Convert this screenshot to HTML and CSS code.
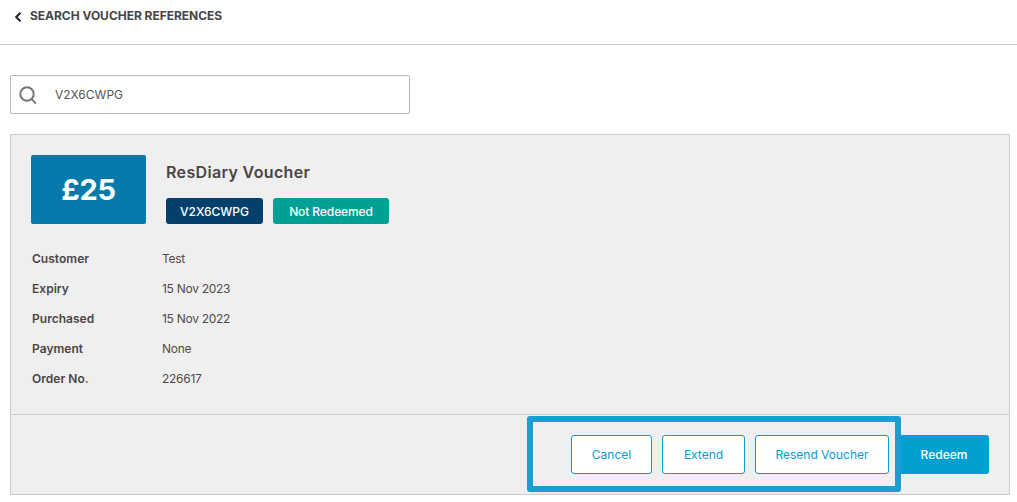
FILE: index.html
```html
<!DOCTYPE html>
<html lang="en">
<head>
<meta charset="utf-8">
<title>Search voucher references</title>
<link rel="stylesheet" href="styles.css">
</head>
<body>
<header class="top">
  <svg class="back" width="8" height="10" viewBox="0 0 8 10"><path d="M6.5 0.8 2.2 5l4.3 4.2" fill="none" stroke="#222" stroke-width="2"/></svg>
  <span class="top-title">SEARCH VOUCHER REFERENCES</span>
</header>
<main class="content">
  <div class="search">
    <svg class="search-icon" width="18" height="19" viewBox="0 0 18 19"><circle cx="8" cy="8" r="6.7" fill="none" stroke="#777" stroke-width="2"/><path d="M12.8 13.2 16.8 17.6" fill="none" stroke="#777" stroke-width="2"/></svg>
    <span class="search-value">V2X6CWPG</span>
  </div>
  <section class="card">
    <div class="card-body">
      <div class="summary">
        <div class="amount">£25</div>
        <div class="summary-text">
          <h1 class="name">ResDiary Voucher</h1>
          <div class="badges">
            <span class="badge badge-code">V2X6CWPG</span>
            <span class="badge badge-status">Not Redeemed</span>
          </div>
        </div>
      </div>
      <dl class="details">
        <dt>Customer</dt><dd>Test</dd>
        <dt>Expiry</dt><dd>15 Nov 2023</dd>
        <dt>Purchased</dt><dd>15 Nov 2022</dd>
        <dt>Payment</dt><dd>None</dd>
        <dt>Order No.</dt><dd>226617</dd>
      </dl>
    </div>
    <div class="card-footer">
      <button class="btn btn-outline btn-cancel">Cancel</button>
      <button class="btn btn-outline btn-extend">Extend</button>
      <button class="btn btn-outline btn-resend">Resend Voucher</button>
      <button class="btn btn-solid">Redeem</button>
      <div class="highlight"></div>
    </div>
  </section>
</main>
</body>
</html>
```
FILE: styles.css
```css
* { box-sizing: border-box; }
html, body { margin: 0; height: 100%; }
body {
  background: #fff;
  font-family: Inter, "Liberation Sans", sans-serif;
  color: #4a4545;
  overflow: hidden;
}
.top {
  height: 45px;
  border-bottom: 1px solid #ccc;
  display: flex;
  align-items: flex-start;
  padding: 9px 0 0 14px;
  gap: 8px;
}
.back { margin-top: 3px; }
.top-title {
  font-size: 12px;
  line-height: 13px;
  font-weight: 700;
  color: #4a4545;
  letter-spacing: -0.03px;
}
.content { padding: 30px 7px 0 10px; }
.search {
  width: 400px;
  height: 39px;
  border: 1px solid #b8b8b8;
  border-radius: 2px;
  display: flex;
  align-items: center;
  padding-left: 8px;
  gap: 18px;
}
.search-icon { flex: none; margin-top: 2px; }
.search-value { font-size: 12px; color: #555; }
.card {
  margin-top: 20px;
  height: 361px;
  background: #efefef;
  border: 1px solid #ccc;
  display: flex;
  flex-direction: column;
}
.card-body { flex: 1; padding: 20px 20px 0; }
.summary { display: flex; gap: 20px; }
.amount {
  width: 115px;
  height: 69px;
  border-radius: 2px;
  background: #067bab;
  color: #fff;
  font-size: 29px;
  font-weight: 700;
  letter-spacing: -0.3px;
  display: flex;
  align-items: center;
  justify-content: center;
}
.name {
  margin: 7px 0 0;
  font-size: 16px;
  line-height: 20px;
  font-weight: 600;
  letter-spacing: 0.35px;
  color: #4a4545;
}
.badges { display: flex; gap: 10px; margin-top: 16px; }
.badge {
  height: 26px;
  border-radius: 3px;
  color: #fff;
  font-size: 12px;
  font-weight: 500;
  display: flex;
  align-items: center;
  justify-content: center;
}
.badge-code { width: 97px; background: #053f6b; }
.badge-status { width: 116px; background: #00a096; letter-spacing: -0.1px; }
.details {
  margin: 19px 0 0 1px;
  display: grid;
  grid-template-columns: 130px 1fr;
  grid-auto-rows: 30px;
  align-items: center;
  font-size: 12px;
}
.details dt { font-weight: 600; color: #4a4545; letter-spacing: 0.03px; }
.details dd { margin: 0; color: #4f4b4b; letter-spacing: -0.28px; }
.card-footer {
  position: relative;
  height: 80px;
  border-top: 1px solid #ccc;
  display: flex;
  justify-content: flex-end;
  align-items: flex-start;
  padding: 20px 20px 0 0;
  gap: 10px;
}
.btn {
  height: 39px;
  border-radius: 3px;
  font: 500 12px Inter, "Liberation Sans", sans-serif;
  padding: 0;
}
.btn-outline { background: #fff; border: 1px solid #069dd0; color: #069dd0; font-weight: 400; }
.btn-cancel { width: 81px; }
.btn-extend { width: 83px; }
.btn-resend { width: 134px; }
.btn-solid { width: 90px; background: #009fd1; border: 0; color: #fff; }
.highlight {
  position: absolute;
  left: 516px;
  top: 1px;
  width: 374px;
  height: 76px;
  border: 6px solid #1a9dd3;
  border-radius: 3px;
}
```
